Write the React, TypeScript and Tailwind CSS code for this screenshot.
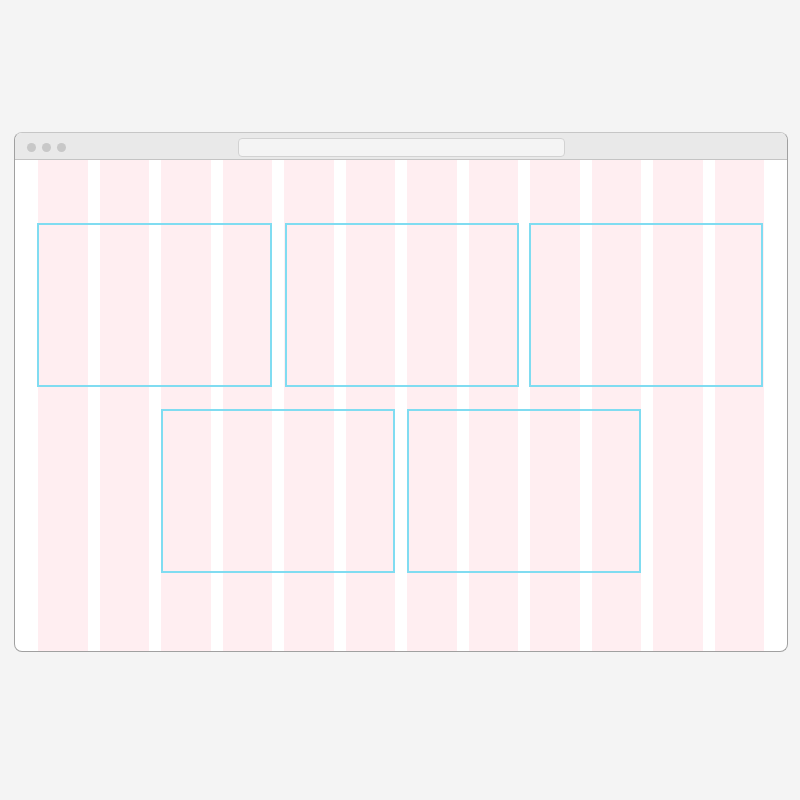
import React from "react";

export default function App() {
  const cols = Array.from({ length: 12 });
  return (
    <div className="min-h-screen w-full bg-[#f4f4f4] pt-[132px] pl-[14px]">
      <div className="w-[774px] h-[520px] rounded-[8px] border border-[#a0a0a0] border-t-[#c6c6c6] overflow-hidden bg-white flex flex-col">
        <div className="h-[27px] shrink-0 bg-[#e9e9e9] border-b border-[#c4c4c4] grid grid-cols-[1fr_327px_1fr] items-center pt-[2px]">
          <div className="flex items-center gap-[6px] pl-[12px]">
            <span className="w-[9px] h-[9px] rounded-full bg-[#c8c8c8]" />
            <span className="w-[9px] h-[9px] rounded-full bg-[#c8c8c8]" />
            <span className="w-[9px] h-[9px] rounded-full bg-[#c8c8c8]" />
          </div>
          <div className="h-[19px] rounded-[4px] border border-[#d2d2d2] bg-[#f4f4f4]" />
          <div />
        </div>
        <div className="relative flex-1">
          <div className="absolute inset-0 grid grid-cols-12 gap-x-[12px] pl-[23px] pr-[23px]">
            {cols.map((_, i) => (
              <div key={i} className="bg-[#ffeef1]" />
            ))}
          </div>
          <div className="relative grid grid-cols-12 gap-x-[12px] gap-y-[22px] pl-[23px] pr-[23px] pt-[63px]">
            <div className="col-span-4 h-[164px] -ml-px border-2 border-[#80dcf1]" />
            <div className="col-span-4 h-[164px] ml-px -mr-px border-2 border-[#80dcf1]" />
            <div className="col-span-4 h-[164px] -ml-px mr-px border-2 border-[#80dcf1]" />
            <div className="col-start-3 col-span-4 h-[164px] border-2 border-[#80dcf1]" />
            <div className="col-span-4 h-[164px] border-2 border-[#80dcf1]" />
          </div>
        </div>
      </div>
    </div>
  );
}
